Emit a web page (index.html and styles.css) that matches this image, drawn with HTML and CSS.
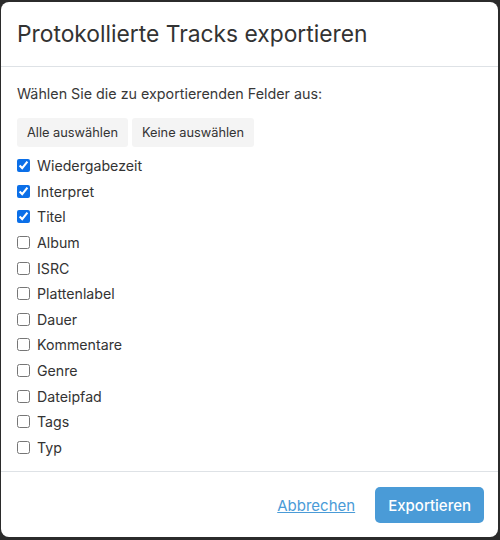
FILE: index.html
```html
<!DOCTYPE html>
<html lang="de">
<head>
<meta charset="utf-8">
<link rel="stylesheet" href="styles.css">
</head>
<body>
<div class="modal">
  <div class="modal-header">
    <h1 class="modal-title">Protokollierte Tracks exportieren</h1>
  </div>
  <div class="modal-body">
    <p class="intro">Wählen Sie die zu exportierenden Felder aus:</p>
    <div class="select-buttons">
      <button class="btn-light">Alle auswählen</button>
      <button class="btn-light">Keine auswählen</button>
    </div>
    <ul class="field-list">
      <li><label><input type="checkbox" checked> Wiedergabezeit</label></li>
      <li><label><input type="checkbox" checked> Interpret</label></li>
      <li><label><input type="checkbox" checked> Titel</label></li>
      <li><label><input type="checkbox"> Album</label></li>
      <li><label><input type="checkbox"> ISRC</label></li>
      <li><label><input type="checkbox"> Plattenlabel</label></li>
      <li><label><input type="checkbox"> Dauer</label></li>
      <li><label><input type="checkbox"> Kommentare</label></li>
      <li><label><input type="checkbox"> Genre</label></li>
      <li><label><input type="checkbox"> Dateipfad</label></li>
      <li><label><input type="checkbox"> Tags</label></li>
      <li><label><input type="checkbox"> Typ</label></li>
    </ul>
  </div>
  <div class="modal-footer">
    <a class="link-cancel" href="#">Abbrechen</a>
    <button class="btn-primary">Exportieren</button>
  </div>
</div>
</body>
</html>
```

FILE: styles.css
```css
html, body {
  margin: 0;
  padding: 0;
}
body {
  background: #2b2b2b;
  font-family: Inter, "Noto Sans", sans-serif;
  color: #333;
  padding: 2px 2px 3px 1px;
  height: 540px;
  box-sizing: border-box;
}
.modal {
  background: #fff;
  border-radius: 8px;
  height: 535px;
  display: flex;
  flex-direction: column;
}
.modal-header {
  padding: 16px 16px;
  border-bottom: 1px solid #dee2e6;
}
.modal-title {
  margin: 0;
  font-size: 22.8px;
  font-weight: 400;
  line-height: 32px;
  color: #333;
}
.modal-body {
  padding: 16px 16px 10px 16px;
  flex: 1;
}
.intro {
  margin: 0 0 13px 0;
  font-size: 14.3px;
  line-height: 22px;
  color: #383838;
}
.select-buttons {
  display: flex;
  gap: 4px;
}
.btn-light {
  font-family: inherit;
  font-size: 12.8px;
  line-height: 17px;
  padding: 6px 10px;
  border: none;
  border-radius: 3px;
  background: #f4f4f4;
  color: #333;
}
.field-list {
  list-style: none;
  margin: 6px 0 0 0;
  padding: 0;
}
.field-list li {
  height: 25.6px;
  display: flex;
  align-items: center;
}
.field-list label {
  display: flex;
  align-items: center;
  gap: 7px;
  font-size: 14.2px;
  color: #333;
}
.field-list input {
  margin: 0;
  width: 13px;
  height: 13px;
  accent-color: #0b6fe8;
}
.modal-footer {
  border-top: 1px solid #dee2e6;
  padding: 15px 14px 14px 16px;
  display: flex;
  justify-content: flex-end;
  align-items: center;
  gap: 20px;
}
.link-cancel {
  font-size: 15px;
  color: #4a9bd7;
  text-decoration: underline;
}
.btn-primary {
  font-family: inherit;
  font-size: 15px;
  font-weight: 500;
  height: 36px;
  padding: 0 13px;
  border: none;
  border-radius: 5px;
  background: #4a9bd7;
  color: #fff;
}
```
